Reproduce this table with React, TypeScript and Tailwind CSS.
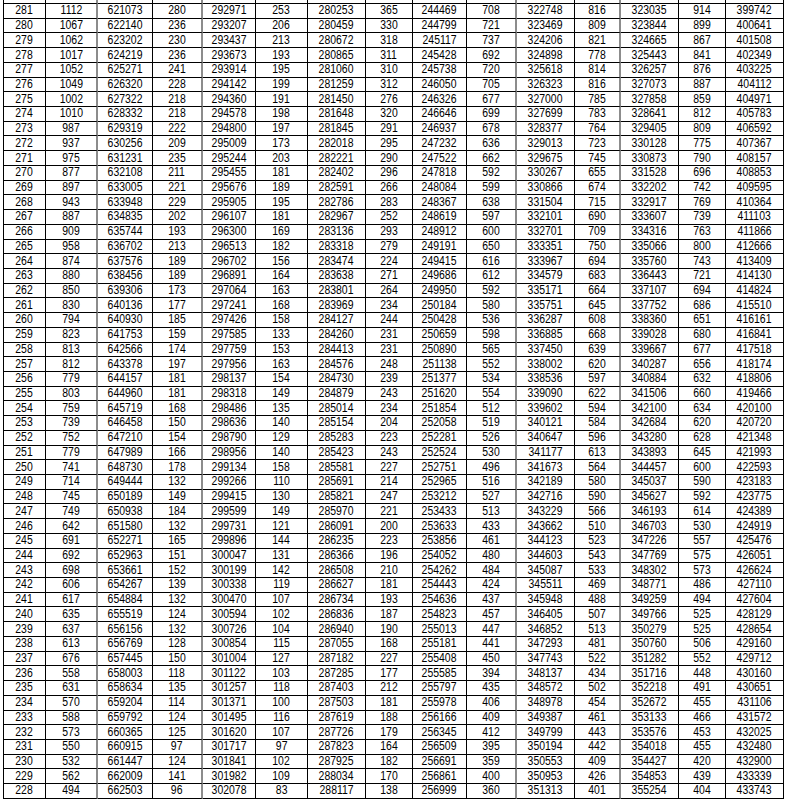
const DATA = `281 1112 621073 280 292971 253 280253 365 244469 708 322748 816 323035 914 399742
280 1067 622140 236 293207 206 280459 330 244799 721 323469 809 323844 899 400641
279 1062 623202 230 293437 213 280672 318 245117 737 324206 821 324665 867 401508
278 1017 624219 236 293673 193 280865 311 245428 692 324898 778 325443 841 402349
277 1052 625271 241 293914 195 281060 310 245738 720 325618 814 326257 876 403225
276 1049 626320 228 294142 199 281259 312 246050 705 326323 816 327073 887 404112
275 1002 627322 218 294360 191 281450 276 246326 677 327000 785 327858 859 404971
274 1010 628332 218 294578 198 281648 320 246646 699 327699 783 328641 812 405783
273 987 629319 222 294800 197 281845 291 246937 678 328377 764 329405 809 406592
272 937 630256 209 295009 173 282018 295 247232 636 329013 723 330128 775 407367
271 975 631231 235 295244 203 282221 290 247522 662 329675 745 330873 790 408157
270 877 632108 211 295455 181 282402 296 247818 592 330267 655 331528 696 408853
269 897 633005 221 295676 189 282591 266 248084 599 330866 674 332202 742 409595
268 943 633948 229 295905 195 282786 283 248367 638 331504 715 332917 769 410364
267 887 634835 202 296107 181 282967 252 248619 597 332101 690 333607 739 411103
266 909 635744 193 296300 169 283136 293 248912 600 332701 709 334316 763 411866
265 958 636702 213 296513 182 283318 279 249191 650 333351 750 335066 800 412666
264 874 637576 189 296702 156 283474 224 249415 616 333967 694 335760 743 413409
263 880 638456 189 296891 164 283638 271 249686 612 334579 683 336443 721 414130
262 850 639306 173 297064 163 283801 264 249950 592 335171 664 337107 694 414824
261 830 640136 177 297241 168 283969 234 250184 580 335751 645 337752 686 415510
260 794 640930 185 297426 158 284127 244 250428 536 336287 608 338360 651 416161
259 823 641753 159 297585 133 284260 231 250659 598 336885 668 339028 680 416841
258 813 642566 174 297759 153 284413 231 250890 565 337450 639 339667 677 417518
257 812 643378 197 297956 163 284576 248 251138 552 338002 620 340287 656 418174
256 779 644157 181 298137 154 284730 239 251377 534 338536 597 340884 632 418806
255 803 644960 181 298318 149 284879 243 251620 554 339090 622 341506 660 419466
254 759 645719 168 298486 135 285014 234 251854 512 339602 594 342100 634 420100
253 739 646458 150 298636 140 285154 204 252058 519 340121 584 342684 620 420720
252 752 647210 154 298790 129 285283 223 252281 526 340647 596 343280 628 421348
251 779 647989 166 298956 140 285423 243 252524 530 341177 613 343893 645 421993
250 741 648730 178 299134 158 285581 227 252751 496 341673 564 344457 600 422593
249 714 649444 132 299266 110 285691 214 252965 516 342189 580 345037 590 423183
248 745 650189 149 299415 130 285821 247 253212 527 342716 590 345627 592 423775
247 749 650938 184 299599 149 285970 221 253433 513 343229 566 346193 614 424389
246 642 651580 132 299731 121 286091 200 253633 433 343662 510 346703 530 424919
245 691 652271 165 299896 144 286235 223 253856 461 344123 523 347226 557 425476
244 692 652963 151 300047 131 286366 196 254052 480 344603 543 347769 575 426051
243 698 653661 152 300199 142 286508 210 254262 484 345087 533 348302 573 426624
242 606 654267 139 300338 119 286627 181 254443 424 345511 469 348771 486 427110
241 617 654884 132 300470 107 286734 193 254636 437 345948 488 349259 494 427604
240 635 655519 124 300594 102 286836 187 254823 457 346405 507 349766 525 428129
239 637 656156 132 300726 104 286940 190 255013 447 346852 513 350279 525 428654
238 613 656769 128 300854 115 287055 168 255181 441 347293 481 350760 506 429160
237 676 657445 150 301004 127 287182 227 255408 450 347743 522 351282 552 429712
236 558 658003 118 301122 103 287285 177 255585 394 348137 434 351716 448 430160
235 631 658634 135 301257 118 287403 212 255797 435 348572 502 352218 491 430651
234 570 659204 114 301371 100 287503 181 255978 406 348978 454 352672 455 431106
233 588 659792 124 301495 116 287619 188 256166 409 349387 461 353133 466 431572
232 573 660365 125 301620 107 287726 179 256345 412 349799 443 353576 453 432025
231 550 660915 97 301717 97 287823 164 256509 395 350194 442 354018 455 432480
230 532 661447 124 301841 102 287925 182 256691 359 350553 409 354427 420 432900
229 562 662009 141 301982 109 288034 170 256861 400 350953 426 354853 439 433339
228 494 662503 96 302078 83 288117 138 256999 360 351313 401 355254 404 433743`;

const rows = DATA.split("\n").map((line) => line.trim().split(/\s+/));

const gridCols =
  "grid grid-cols-[42px_52px_55px_50px_53px_52px_58px_47px_54px_50px_58px_46px_58px_47px_58px]";

// columns whose right edge shows as a soft grey double line in the scan
const softEdge = [1, 3, 9, 11];

const cellBorder = (c: number) =>
  softEdge.includes(c)
    ? "border-b border-b-black border-r-2 border-r-[#8c8c8c]"
    : "border-r border-b border-black";

export default function App() {
  return (
    <div className="w-[786px] h-[801px] overflow-hidden bg-white font-['Liberation_Sans',Arial,sans-serif] text-black">
      <div className="ml-[3px] w-[781px] border-l border-black">
        {/* stub of the row above, cut off by the crop */}
        <div className={gridCols}>
          {rows[0].map((_, c) => (
            <div key={c} className={`h-[4px] ${cellBorder(c)}`} />
          ))}
        </div>
        {rows.map((row, r) => (
          <div key={r} className={gridCols}>
            {row.map((val, c) => (
              <div
                key={c}
                className={`h-[14.72px] flex items-center justify-center ${cellBorder(c)}`}
              >
                <span className="inline-block text-[12px] leading-[13px] scale-x-[0.87]">{val}</span>
              </div>
            ))}
          </div>
        ))}
      </div>
    </div>
  );
}
